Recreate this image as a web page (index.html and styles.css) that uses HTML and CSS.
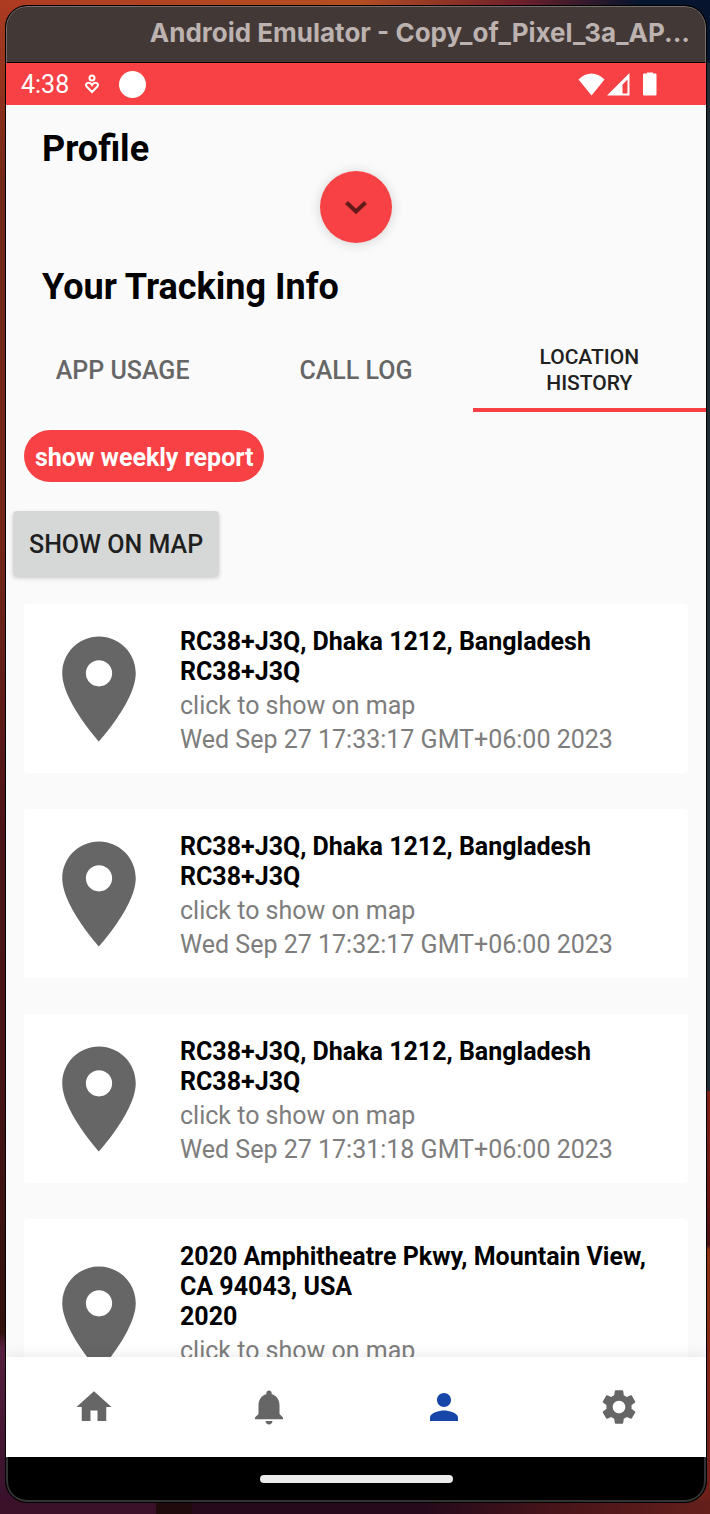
FILE: index.html
```html
<!DOCTYPE html>
<html lang="en">
<head>
<meta charset="utf-8">
<meta name="viewport" content="width=device-width, initial-scale=1">
<title>Android Emulator</title>
<link rel="stylesheet" href="styles.css">
</head>
<body>
<svg class="defs" aria-hidden="true">
  <symbol id="pin" viewBox="0 0 24 24"><path d="M12 2C8.13 2 5 5.13 5 9c0 5.250 7 13 7 13s7-7.750 7-13c0-3.870-3.130-7-7-7zm0 9.500a2.500 2.500 0 0 1 0-5 2.500 2.500 0 0 1 0 5z"/></symbol>
</svg>
<div class="window">
  <div class="titlebar"><span class="title">Android Emulator - Copy_of_Pixel_3a_AP...</span></div>
  <div class="status">
    <span class="clock">4:38</span>
    <svg class="heart" viewBox="0 0 14 20" aria-hidden="true"><circle cx="7" cy="4" r="2.500"/><path d="M7 18 L1.800 12.800 C0 10.500 1.600 8.700 3.500 8.700 C5.200 8.700 6.300 9.700 7 11 C7.700 9.700 8.800 8.700 10.500 8.700 C12.400 8.700 14 10.500 12.200 12.800 Z"/></svg>
    <span class="dot"></span>
    <svg class="signals" viewBox="0 0 80 24" aria-hidden="true"><path d="M.5 7.500C8-.6 19-.6 26.500 7.500L13.500 23.500Z"/><path fill-rule="evenodd" d="M29 23.500 51.500 1V23.500ZM44.500 12.500V21.500H49.500V7.500Z"/><path d="M69 1.500V.5H75V1.500H77.500Q78.500 1.500 78.500 2.500V22.500Q78.500 23.500 77.500 23.500H66Q65 23.500 65 22.500V2.500Q65 1.500 66 1.500Z"/></svg>
  </div>
  <main class="screen">
    <h1 class="heading">Profile</h1>
    <button class="fab" type="button" aria-label="Expand profile"><svg class="chevron" viewBox="0 0 24 16" aria-hidden="true"><path d="M2.500 3.500 12 12.500 21.500 3.500"/></svg></button>
    <h2 class="heading tracking">Your Tracking Info</h2>
    <div class="tabs" role="tablist">
      <button class="tab" type="button" role="tab" aria-selected="false">APP USAGE</button>
      <button class="tab" type="button" role="tab" aria-selected="false">CALL LOG</button>
      <button class="tab active" type="button" role="tab" aria-selected="true">LOCATION<br>HISTORY</button>
    </div>
    <button class="report" type="button">show weekly report</button>
    <button class="map" type="button">SHOW ON MAP</button>
    <ul class="list">
      <li class="card">
        <svg class="pin" aria-hidden="true"><use href="#pin"/></svg>
        <div class="info"><h3 class="place">RC38+J3Q, Dhaka 1212, Bangladesh<br>RC38+J3Q</h3><p class="line">click to show on map</p><p class="line">Wed Sep 27 17:33:17 GMT+06:00 2023</p></div>
      </li>
      <li class="card">
        <svg class="pin" aria-hidden="true"><use href="#pin"/></svg>
        <div class="info"><h3 class="place">RC38+J3Q, Dhaka 1212, Bangladesh<br>RC38+J3Q</h3><p class="line">click to show on map</p><p class="line">Wed Sep 27 17:32:17 GMT+06:00 2023</p></div>
      </li>
      <li class="card">
        <svg class="pin" aria-hidden="true"><use href="#pin"/></svg>
        <div class="info"><h3 class="place">RC38+J3Q, Dhaka 1212, Bangladesh<br>RC38+J3Q</h3><p class="line">click to show on map</p><p class="line">Wed Sep 27 17:31:18 GMT+06:00 2023</p></div>
      </li>
      <li class="card">
        <svg class="pin" aria-hidden="true"><use href="#pin"/></svg>
        <div class="info"><h3 class="place">2020 Amphitheatre Pkwy, Mountain View, CA 94043, USA<br>2020</h3><p class="line">click to show on map</p></div>
      </li>
    </ul>
  </main>
  <nav class="nav">
    <button class="item" type="button" aria-label="Home"><svg class="icon" viewBox="0 0 24 24" aria-hidden="true"><path d="M10 20v-6h4v6h5v-8h3L12 3 2 12h3v8z"/></svg></button>
    <button class="item" type="button" aria-label="Notifications"><svg class="icon" viewBox="0 0 24 24" aria-hidden="true"><path d="M12 22c1.100 0 2-.9 2-2h-4c0 1.100.9 2 2 2zm6-6v-5c0-3.070-1.630-5.640-4.500-6.320V4c0-.83-.67-1.500-1.500-1.500s-1.500.67-1.500 1.500v.68C7.640 5.360 6 7.920 6 11v5l-2 2v1h16v-1l-2-2z"/></svg></button>
    <button class="item current" type="button" aria-label="Profile"><svg class="icon" viewBox="0 0 24 24" aria-hidden="true"><path d="M12 12c2.210 0 4-1.790 4-4s-1.790-4-4-4-4 1.790-4 4 1.790 4 4 4zm0 2c-2.670 0-8 1.340-8 4v2h16v-2c0-2.660-5.330-4-8-4z"/></svg></button>
    <button class="item" type="button" aria-label="Settings"><svg class="icon" viewBox="0 0 24 24" aria-hidden="true"><path d="M19.140 12.940c.04-.3.06-.61.06-.94 0-.32-.02-.64-.07-.94l2.030-1.580c.18-.14.23-.41.12-.61l-1.920-3.320c-.12-.22-.37-.29-.59-.22l-2.390.96c-.5-.38-1.030-.7-1.620-.94l-.36-2.540c-.04-.24-.24-.41-.48-.41h-3.840c-.24 0-.43.17-.47.41l-.36 2.540c-.59.24-1.130.57-1.620.94l-2.390-.96c-.22-.08-.47 0-.59.22L2.740 8.870c-.12.21-.08.47.12.61l2.030 1.580c-.05.3-.09.63-.09.94s.02.64.07.94l-2.030 1.580c-.18.14-.23.41-.12.61l1.920 3.320c.12.22.37.29.59.22l2.390-.96c.5.38 1.030.7 1.620.94l.36 2.540c.05.24.24.41.48.41h3.840c.24 0 .44-.17.47-.41l.36-2.540c.59-.24 1.130-.56 1.620-.94l2.390.96c.22.08.47 0 .59-.22l1.920-3.320c.12-.22.07-.47-.12-.61l-2.010-1.580zM12 15.600c-1.980 0-3.600-1.620-3.600-3.600s1.620-3.600 3.600-3.600 3.600 1.620 3.600 3.600-1.620 3.600-3.600 3.600z"/></svg></button>
  </nav>
  <div class="gesture"><span class="handle"></span></div>
</div>
</body>
</html>
```
FILE: styles.css
```css
* { box-sizing: border-box; }

body {
  margin: 0;
  height: 100vh;
  padding: 5px 3px 11px 5px;
  font-family: Roboto, "Noto Sans", sans-serif;
  background:
    linear-gradient(90deg, #ad3b22, #b54e23 50%, #6e2029 73%, #07142e 90%) top / 100% 6px no-repeat,
    linear-gradient(90deg, #3a1128 0 22%, #200a0c 22% 27%, #260a1b 27% 60%, #4a1519 80%, #641f1b) bottom / 100% 14px no-repeat,
    linear-gradient(#07142e 0 63px, #202c31 63px 1091px, #7a2515 1091px, #651810 1190px, #491111 1245px, #8b3216 1250px, #6b1f1a) right / 24px 100% no-repeat,
    linear-gradient(#ad3b22, #722818 12%, #732718 36%, #4c1418 55%, #4a1517 68%, #32110d 88%, #55203f 89%, #37102a);
}

button {
  border: 0;
  padding: 0;
  font-family: inherit;
  cursor: pointer;
}

.defs { position: absolute; width: 0; height: 0; }

.window {
  display: flex;
  flex-direction: column;
  height: 100%;
  overflow: hidden;
  border: 1px solid #000;
  border-radius: 22px;
  background: #000;
}

.titlebar {
  flex: none;
  height: 57px;
  padding: 0 15px 4px;
  border: 2px solid #766e6b;
  border-width: 1px 1px 0;
  border-bottom: 1px solid #000;
  border-radius: 21px 21px 0 0;
  background: #423937;
  display: flex;
  align-items: center;
  justify-content: flex-end;
}

.title {
  color: #bcb2af;
  font-family: Inter, sans-serif;
  font-size: 26px;
  font-weight: 700;
  white-space: nowrap;
}

.status {
  flex: none;
  height: 42px;
  padding: 0 48px 0 15px;
  display: flex;
  align-items: center;
  background: #f74144;
  color: #fff;
}

.clock { font-size: 25px; }

.heart {
  width: 14px;
  height: 20px;
  margin-left: 16px;
  fill: none;
  stroke: #fff;
  stroke-width: 2;
}

.dot {
  width: 27px;
  height: 27px;
  margin-left: 20px;
  border-radius: 50%;
  background: #fff;
}

.signals {
  width: 80px;
  height: 24px;
  margin-left: auto;
  fill: #fff;
}

.screen {
  flex: 1;
  min-height: 0;
  overflow: hidden;
  display: flex;
  flex-direction: column;
  align-items: flex-start;
  padding-top: 22px;
  background: #fafafa;
}

.heading {
  flex: none;
  margin: 0 36px;
  font-size: 36px;
  line-height: 44px;
  font-weight: 700;
  color: #000;
}

.tracking { margin-top: 22px; }

.fab {
  flex: none;
  align-self: center;
  width: 72px;
  height: 72px;
  display: grid;
  place-items: center;
  border-radius: 50%;
  background: #f74144;
  box-shadow: 0 1px 12px rgba(0, 0, 0, .16);
}

.chevron {
  width: 24px;
  height: 16px;
  fill: none;
  stroke: #631a1b;
  stroke-width: 4;
}

.tabs {
  flex: none;
  align-self: stretch;
  display: grid;
  grid-template-columns: repeat(3, 1fr);
  height: 84px;
  margin-top: 19px;
}

.tab {
  padding-top: 4px;
  background: none;
  border-bottom: 4px solid transparent;
  color: #666;
  font-size: 25px;
  font-weight: 500;
}

.tab.active {
  border-color: #f74144;
  color: #212121;
  font-size: 21px;
  line-height: 26px;
}

.report {
  flex: none;
  height: 52px;
  margin: 18px 24px 0 18px;
  padding: 2px 11px 0;
  border-radius: 26px;
  background: #f74144;
  color: #fff;
  font-size: 25px;
  font-weight: 700;
}

.map {
  flex: none;
  height: 65px;
  margin: 29px 7px 0;
  padding: 2px 16px 0;
  border-radius: 4px;
  background: #d6d8d7;
  box-shadow: 0 2px 4px rgba(0, 0, 0, .2);
  color: #1f1f1f;
  font-size: 25px;
  font-weight: 500;
}

.list {
  flex: none;
  align-self: stretch;
  display: grid;
  gap: 36px;
  margin: 28px 18px 0;
  padding: 0;
  list-style: none;
}

.card {
  display: flex;
  align-items: center;
  gap: 18px;
  min-height: 169px;
  padding: 0 12px;
  border-radius: 4px;
  background: #fff;
}

.card:last-child { min-height: 199px; }

.pin {
  flex: none;
  width: 126px;
  height: 126px;
  fill: #666;
}

.info {
  flex: 1;
  align-self: flex-start;
  display: grid;
  gap: 4px;
  padding: 23px 0 18px;
  font-size: 25px;
  line-height: 30px;
}

.place {
  margin: 0;
  font-size: 25px;
  font-weight: 700;
  color: #000;
}

.line { margin: 0; color: #7d7d7d; }

.nav {
  flex: none;
  position: relative;
  display: grid;
  grid-template-columns: repeat(4, 1fr);
  height: 100px;
  background: #fff;
  box-shadow: 0 0 14px rgba(0, 0, 0, .1);
}

.item {
  display: grid;
  place-items: center;
  background: none;
  color: #666;
}

.item.current { color: #1646a8; }

.icon {
  width: 42px;
  height: 42px;
  fill: currentColor;
}

.gesture {
  flex: none;
  height: 45px;
  display: grid;
  place-items: center;
  border: 2px solid #333;
  border-top: 0;
  border-radius: 0 0 21px 21px;
  background: #000;
}

.handle {
  width: 193px;
  height: 8px;
  border-radius: 4px;
  background: #ebebeb;
}
```
